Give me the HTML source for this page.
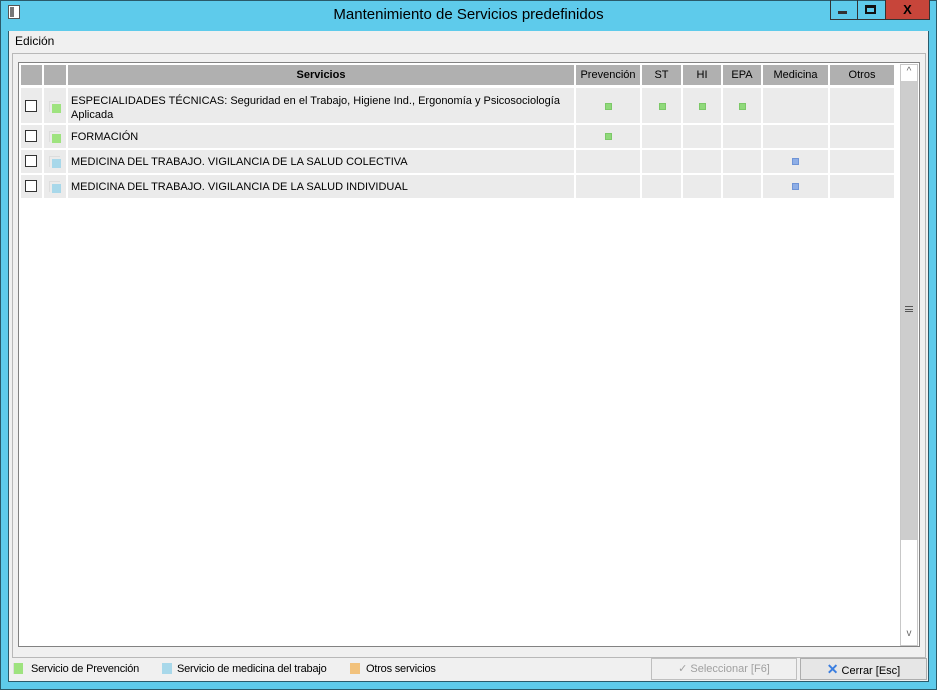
<!DOCTYPE html>
<html><head><meta charset="utf-8"><style>
*{margin:0;padding:0;box-sizing:border-box}
body{width:937px;height:690px;background:#5ecbeb;font-family:"Liberation Sans",sans-serif;font-size:11px;color:#000;position:relative;overflow:hidden}
.a{position:absolute}
.hd{background:#b0b0b0;top:65px;height:20px;text-align:center;line-height:20px;font-size:11px}
.c{background:#ebebeb}
.g{width:7px;height:7px;background:#8fd97a;border:1px solid #7cc868}
.b{width:7px;height:7px;background:#8eaee6;border:1px solid #6f94d6}
.cb{width:12px;height:12px;border:1px solid #333;background:#fff}
.ic{width:11px;height:11px;border-left:1px solid #ddd;border-top:1px solid #ddd}
.ic i{position:absolute;left:2px;top:2px;width:9px;height:9px}
.lg{font-size:11px;letter-spacing:-0.2px}
</style></head><body>
<div class="a" style="left:0;top:0;width:937px;height:690px;border:1px solid #2a5a6a"></div>
<div class="a" style="left:8px;top:5px;width:12px;height:14px;background:#fff;border:1px solid #555"></div>
<div class="a" style="left:10px;top:7px;width:4px;height:10px;background:#777"></div>
<div class="a" style="left:0;top:6px;width:937px;text-align:center;font-size:15px">Mantenimiento de Servicios predefinidos</div>
<div class="a" style="left:830px;top:0;width:28px;height:20px;border:1px solid #333;border-top:0"></div>
<div class="a" style="left:838px;top:11px;width:9px;height:3px;background:#333"></div>
<div class="a" style="left:857px;top:0;width:29px;height:20px;border:1px solid #333;border-top:0"></div>
<div class="a" style="left:865px;top:5px;width:11px;height:9px;border:2px solid #111;border-top-width:3px"></div>
<div class="a" style="left:885px;top:0;width:45px;height:20px;background:#c7453a;border:1px solid #333;border-top:0;color:#000;text-align:center;font-weight:bold;font-size:13px;line-height:19px">X</div>
<div class="a" style="left:8px;top:31px;width:921px;height:651px;background:#f0f0f0;border:1px solid #2a5a6a;border-top:0"></div>
<div class="a" style="left:15px;top:34px;font-size:12px">Edición</div>
<div class="a" style="left:12px;top:53px;width:914px;height:605px;border:1px solid #b8b8b8"></div>
<div class="a" style="left:18px;top:62px;width:902px;height:585px;border:1px solid #828282;background:#fff"></div>
<div class="a hd" style="left:21px;width:21px"></div>
<div class="a hd" style="left:44px;width:22px"></div>
<div class="a hd" style="left:68px;width:506px;font-weight:bold">Servicios</div>
<div class="a hd" style="left:576px;width:64px">Prevención</div>
<div class="a hd" style="left:642px;width:39px">ST</div>
<div class="a hd" style="left:683px;width:38px">HI</div>
<div class="a hd" style="left:723px;width:38px">EPA</div>
<div class="a hd" style="left:763px;width:65px">Medicina</div>
<div class="a hd" style="left:830px;width:64px">Otros</div>
<div class="a c" style="left:21px;top:88px;width:21px;height:35px"></div><div class="a c" style="left:44px;top:88px;width:22px;height:35px"></div><div class="a c" style="left:68px;top:88px;width:506px;height:35px"></div><div class="a c" style="left:576px;top:88px;width:64px;height:35px"></div><div class="a c" style="left:642px;top:88px;width:39px;height:35px"></div><div class="a c" style="left:683px;top:88px;width:38px;height:35px"></div><div class="a c" style="left:723px;top:88px;width:38px;height:35px"></div><div class="a c" style="left:763px;top:88px;width:65px;height:35px"></div><div class="a c" style="left:830px;top:88px;width:64px;height:35px"></div>
<div class="a c" style="left:21px;top:125px;width:21px;height:23px"></div><div class="a c" style="left:44px;top:125px;width:22px;height:23px"></div><div class="a c" style="left:68px;top:125px;width:506px;height:23px"></div><div class="a c" style="left:576px;top:125px;width:64px;height:23px"></div><div class="a c" style="left:642px;top:125px;width:39px;height:23px"></div><div class="a c" style="left:683px;top:125px;width:38px;height:23px"></div><div class="a c" style="left:723px;top:125px;width:38px;height:23px"></div><div class="a c" style="left:763px;top:125px;width:65px;height:23px"></div><div class="a c" style="left:830px;top:125px;width:64px;height:23px"></div>
<div class="a c" style="left:21px;top:150px;width:21px;height:23px"></div><div class="a c" style="left:44px;top:150px;width:22px;height:23px"></div><div class="a c" style="left:68px;top:150px;width:506px;height:23px"></div><div class="a c" style="left:576px;top:150px;width:64px;height:23px"></div><div class="a c" style="left:642px;top:150px;width:39px;height:23px"></div><div class="a c" style="left:683px;top:150px;width:38px;height:23px"></div><div class="a c" style="left:723px;top:150px;width:38px;height:23px"></div><div class="a c" style="left:763px;top:150px;width:65px;height:23px"></div><div class="a c" style="left:830px;top:150px;width:64px;height:23px"></div>
<div class="a c" style="left:21px;top:175px;width:21px;height:23px"></div><div class="a c" style="left:44px;top:175px;width:22px;height:23px"></div><div class="a c" style="left:68px;top:175px;width:506px;height:23px"></div><div class="a c" style="left:576px;top:175px;width:64px;height:23px"></div><div class="a c" style="left:642px;top:175px;width:39px;height:23px"></div><div class="a c" style="left:683px;top:175px;width:38px;height:23px"></div><div class="a c" style="left:723px;top:175px;width:38px;height:23px"></div><div class="a c" style="left:763px;top:175px;width:65px;height:23px"></div><div class="a c" style="left:830px;top:175px;width:64px;height:23px"></div>
<div class="a cb" style="left:25px;top:100px"></div><div class="a cb" style="left:25px;top:130px"></div><div class="a cb" style="left:25px;top:155px"></div><div class="a cb" style="left:25px;top:180px"></div>
<div class="a ic" style="left:49px;top:101px"><i style="background:#9ee37f"></i></div>
<div class="a ic" style="left:49px;top:131px"><i style="background:#9ee37f"></i></div>
<div class="a ic" style="left:49px;top:156px"><i style="background:#a8d8ea"></i></div>
<div class="a ic" style="left:49px;top:181px"><i style="background:#a8d8ea"></i></div>
<div class="a" style="left:71px;top:94px;line-height:14px">ESPECIALIDADES TÉCNICAS: Seguridad en el Trabajo, Higiene Ind., Ergonomía y Psicosociología<br>Aplicada</div>
<div class="a" style="left:71px;top:131px">FORMACIÓN</div>
<div class="a" style="left:71px;top:156px">MEDICINA DEL TRABAJO. VIGILANCIA DE LA SALUD COLECTIVA</div>
<div class="a" style="left:71px;top:181px">MEDICINA DEL TRABAJO. VIGILANCIA DE LA SALUD INDIVIDUAL</div>
<div class="a g" style="left:605px;top:103px"></div><div class="a g" style="left:659px;top:103px"></div><div class="a g" style="left:699px;top:103px"></div><div class="a g" style="left:739px;top:103px"></div>
<div class="a g" style="left:605px;top:133px"></div>
<div class="a b" style="left:792px;top:158px"></div><div class="a b" style="left:792px;top:183px"></div>
<div class="a" style="left:900px;top:64px;width:18px;height:582px;border:1px solid #c8c8c8;background:#fff"></div>
<div class="a" style="left:901px;top:81px;width:16px;height:459px;background:#cdcdcd"></div>
<div class="a" style="left:901px;top:66px;width:16px;text-align:center;color:#666;font-size:10px">^</div>
<div class="a" style="left:901px;top:628px;width:16px;text-align:center;color:#666;font-size:10px">v</div>
<div class="a" style="left:905px;top:306px;width:8px;height:6px;border-top:1px solid #555;border-bottom:1px solid #555"></div>
<div class="a" style="left:905px;top:309px;width:8px;height:1px;background:#555"></div>
<div class="a" style="left:13px;top:663px;width:10px;height:11px;background:#9ee37f;border-left:1px solid #ddd"></div>
<div class="a lg" style="left:31px;top:663px">Servicio de Prevención</div>
<div class="a" style="left:162px;top:663px;width:10px;height:11px;background:#a8d8ea"></div>
<div class="a lg" style="left:177px;top:663px">Servicio de medicina del trabajo</div>
<div class="a" style="left:350px;top:663px;width:10px;height:11px;background:#f2c27c"></div>
<div class="a lg" style="left:366px;top:663px">Otros servicios</div>
<div class="a" style="left:651px;top:658px;width:146px;height:22px;border:1px solid #bfbfbf;background:#f0f0f0;color:#a0a0a0;text-align:center;line-height:20px;font-size:11px">✓ Seleccionar [F6]</div>
<div class="a" style="left:800px;top:658px;width:127px;height:22px;border:1px solid #adadad;background:#e6e6e6;text-align:center;line-height:20px;font-size:11px"><span style="color:#3a7ee0;font-weight:bold;font-size:14px">✕</span> Cerrar [Esc]</div>
</body></html>
